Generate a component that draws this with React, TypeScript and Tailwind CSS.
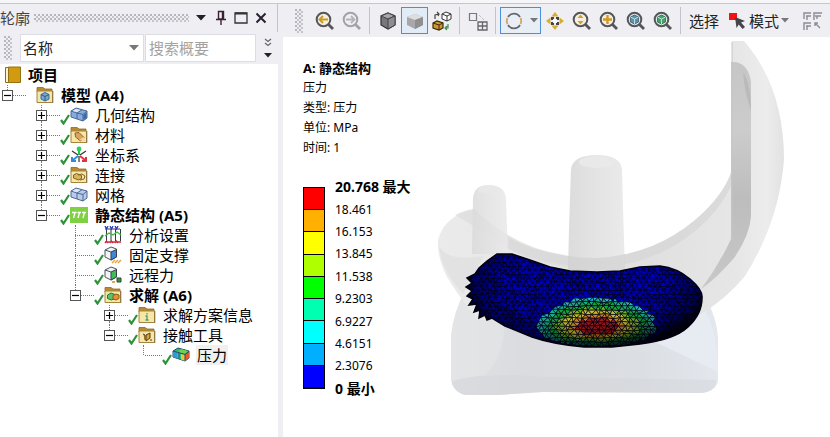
import React from 'react';

type TreeItem = {
  label: string;
  icon: React.ReactNode;
  // number of ancestor columns in front of the row
  depth: number;
  state?: 'open' | 'closed';
  down?: boolean;
  checked?: boolean;
  bold?: boolean;
  selected?: boolean;
};

/* ---------- tree icons ---------- */

const Icon = ({ children }: { children?: React.ReactNode }) => (
  <svg viewBox="0 0 18 18" className="h-[18px] w-[18px] shrink-0" aria-hidden="true">
    {children}
  </svg>
);

const Folder = ({ children }: { children?: React.ReactNode }) => (
  <Icon>
    <path d="M1 4.5V1.5h6l2 1.5h7v3H1z" fill="#b98a2e" stroke="#8b6a25" strokeWidth=".8" />
    <path d="M1 5h15.5v11.5H1z" fill="#f6e7a8" stroke="#a5853c" />
    <path d="M16.8 5v12" stroke="#8b7440" />
    {children}
  </Icon>
);

const Blocks = ({ light }: { light?: boolean }) => (
  <Icon>
    <path d="M1 5l5-3 11 3v7l-4 3L1 11z" fill={light ? '#b9cbea' : '#86abdc'} stroke="#4a6796" />
    <path d="M1 5l6 2 6 1.500 4-3.500M13 8.500V15M7 7v6M7 7l5-3.300" fill="none" stroke="#4a6796" />
    <path d="M2.500 5L6 2.800l4.500 1.200L7 6.300z" fill="#dce8fa" />
    {!light && <path d="M13.500 9l3-2.500v5.200l-3 2.300z" fill="#3c66a4" />}
  </Icon>
);

const Cube = ({ face, children }: { face: string; children?: React.ReactNode }) => (
  <Icon>
    <path d="M1 4l6-3 5.500 2v8L7 14l-6-3z" fill="#f2f5f8" stroke="#4b545e" />
    <path d="M7 6l5.500-2.500v7.500L7 14z" fill={face} stroke="#35414d" />
    <path d="M1 4l6 2" stroke="#4b545e" />
    {children}
  </Icon>
);

const ProjectIcon = () => (
  <Icon>
    <path d="M1.500 1.500h3v15h-3z" fill="#fff3cf" stroke="#8c6a1a" />
    <path d="M4.500 1h12v15.500h-12z" fill="#d29a10" stroke="#94700f" />
  </Icon>
);

const ModelIcon = () => (
  <Folder>
    <circle cx="9" cy="11" r="5" fill="#d5e6f3" />
    <path d="M9 6.500l4 2v4.500l-4 2-4-2V8.500z" fill="#7ba7cc" stroke="#3f6a92" />
    <path d="M5 8.500l4 2 4-2M9 10.500V15" fill="none" stroke="#315a80" />
  </Folder>
);

const MaterialIcon = () => (
  <Folder>
    <path d="M5 7l4-.5 5 5-3.500 3.500-5-4z" fill="#dda35e" stroke="#8f632c" />
    <path d="M9 14l5-3 1 4z" fill="#f3d7a2" />
  </Folder>
);

const AxesIcon = () => (
  <Icon>
    <path d="M9 9V2" stroke="#1fc44b" strokeWidth="2" />
    <circle cx="9" cy="3" r="2.400" fill="#27d256" />
    <path d="M8 10l-5 4M2 11v4h4" fill="none" stroke="#2f8be0" strokeWidth="2" />
    <path d="M10 10l5 4M16 11v4h-4" fill="none" stroke="#e23142" strokeWidth="2" />
    <path d="M2 5l6 4M16 5l-6 4M9 10v6" stroke="#333" strokeWidth="1.200" />
  </Icon>
);

const ConnectionsIcon = () => (
  <Folder>
    <path d="M3.500 9l3-1.500 5 2v3l-3 1.500-5-2z" fill="#d8b45c" stroke="#80622a" />
    <path d="M8 9l4-1 3 2-1 3-4 1" fill="none" stroke="#80622a" />
  </Folder>
);

const StaticIcon = () => (
  <Icon>
    <path d="M0 1h18v16H0z" fill="#7fd044" />
    <path d="M2 6.500h4.500M7.500 6.500H11M12 6.500h4M5 6.500L3.500 12M9.500 6.500L8 12M14.500 6.500L13 12" stroke="#fff" strokeWidth="1.300" />
  </Icon>
);

const AnalysisIcon = () => (
  <Icon>
    <path d="M1 3h15M2.500 3v12M7 3v12M11.500 3v12M16.500 3v12" stroke="#333a44" />
    <path d="M1 10l4-3 4 2 4-3 4 3" fill="none" stroke="#46b94a" strokeWidth="1.400" />
    <path d="M1 0l1.500 3L4 0M6 0l1.500 3L9 0M11 0l1.500 3L14 0" fill="none" stroke="#2a3cc8" strokeWidth="1.300" />
    <path d="M1 17l1.500-2L4 17M6 17l1.500-2L9 17M11 17l1.500-2 1.500 2M1 16h16" fill="none" stroke="#d22b35" strokeWidth="1.300" />
  </Icon>
);

const SolutionIcon = () => (
  <Folder>
    <path d="M3.500 9l3.500-2 4 1.500v4L7.500 14l-4-1.500z" fill="#4fc96a" stroke="#28753c" />
    <path d="M9 9.500l3-1.500 3 1v3.500L12 14l-3-1z" fill="#e79038" stroke="#8d5a21" />
  </Folder>
);

const InfoIcon = () => (
  <Folder>
    <path d="M9 7v1.500M7.500 10H9v4M7.500 14h3" fill="none" stroke="#43a06d" strokeWidth="1.300" />
  </Folder>
);

const ContactIcon = () => (
  <Folder>
    <path d="M5 8l2 1v5M8 9l4-2v5l-4 3z" fill="#d9a23a" stroke="#4d3c17" />
    <path d="M13 13v2" stroke="#4d3c17" />
  </Folder>
);

const PressureIcon = () => (
  <Icon>
    <path d="M1 5l5-3 11 3v7l-4 3L1 11z" fill="#35b96c" stroke="#26486f" />
    <path d="M1 5l4 1.500v6L1 11z" fill="#2f9ada" />
    <path d="M5 6.500l3.500 1v6L5 12.300z" fill="#33c5a0" />
    <path d="M13 8.500l4-3V12l-4 3z" fill="#e45a28" />
    <path d="M9 7.500l4 1V15l-4-1.500z" fill="#e8c93a" />
    <path d="M9 3l7 2-3.500 3-6-2z" fill="#6fd04a" />
    <path d="M1 5l12 3.500 4-3M13 8.500V15M7 7v6" fill="none" stroke="#26486f" />
  </Icon>
);

const FixedIcon = () => (
  <Cube face="#3f86d8">
    <path d="M8 17l3-3M11 17l3-3M14 17l3-3" stroke="#e4a33a" strokeWidth="1.400" />
  </Cube>
);

const RemoteForceIcon = () => (
  <Cube face="#3cbf50">
    <path d="M13 12h4v4h-4z" fill="#3e8d4b" stroke="#23512b" />
    <path d="M8 16h3" stroke="#d68632" strokeWidth="1.500" />
  </Cube>
);

const items: TreeItem[] = [
  { label: '模型 (A4)', icon: <ModelIcon />, depth: 0, state: 'open', bold: true },
  { label: '几何结构', icon: <Blocks />, depth: 1, state: 'closed', down: true, checked: true },
  { label: '材料', icon: <MaterialIcon />, depth: 1, state: 'closed', down: true, checked: true },
  { label: '坐标系', icon: <AxesIcon />, depth: 1, state: 'closed', down: true, checked: true },
  { label: '连接', icon: <ConnectionsIcon />, depth: 1, state: 'closed', down: true, checked: true },
  { label: '网格', icon: <Blocks light />, depth: 1, state: 'closed', down: true, checked: true },
  { label: '静态结构 (A5)', icon: <StaticIcon />, depth: 1, state: 'open', checked: true, bold: true },
  { label: '分析设置', icon: <AnalysisIcon />, depth: 2, down: true, checked: true },
  { label: '固定支撑', icon: <FixedIcon />, depth: 2, down: true, checked: true },
  { label: '远程力', icon: <RemoteForceIcon />, depth: 2, down: true, checked: true },
  { label: '求解 (A6)', icon: <SolutionIcon />, depth: 2, state: 'open', checked: true, bold: true },
  { label: '求解方案信息', icon: <InfoIcon />, depth: 3, state: 'closed', down: true, checked: true },
  { label: '接触工具', icon: <ContactIcon />, depth: 3, state: 'open', checked: true },
  { label: '压力', icon: <PressureIcon />, depth: 4, checked: true, selected: true },
];

const VLine = ({ on }: { on?: boolean }) => (
  <span className={on ? 'w-px flex-1 border-l border-dotted border-[#777]' : 'w-px flex-1'} />
);

const TreeRow = ({ item }: { item: TreeItem }) => (
  <li role="treeitem" aria-level={item.depth + 2} className="flex h-5 items-center">
    {Array.from({ length: item.depth }, (_, i) => (
      <span key={i} className="w-[34px] shrink-0" />
    ))}
    <span className="flex h-5 w-[36px] shrink-0 items-center pl-0.5">
      <span className="flex h-5 w-[11px] shrink-0 flex-col items-center">
        <VLine on />
        {item.state && (
          <button
            aria-label={item.state === 'open' ? '折叠' : '展开'}
            className="flex h-[11px] w-[11px] items-center justify-center border border-[#555] bg-white"
          >
            <svg viewBox="0 0 7 7" className="h-[7px] w-[7px]">
              <path d={item.state === 'open' ? 'M0 3.500h7' : 'M0 3.500h7M3.500 0v7'} stroke="#000" strokeWidth="1.200" />
            </svg>
          </button>
        )}
        <VLine on={item.down} />
      </span>
      <span className={'h-0 flex-1 border-t border-dotted border-[#777]' + (item.state ? '' : ' -ml-1')} />
      <svg viewBox="0 0 10 12" className="mt-2 h-3 w-[10px] shrink-0" aria-hidden="true">
        {item.checked && <path d="M1 7l2.500 3.500L9 2" fill="none" stroke="#2d9236" strokeWidth="2.200" />}
      </svg>
    </span>
    {item.icon}
    <span
      className={
        'ml-1.5 whitespace-nowrap px-px ' + (item.bold ? 'font-bold ' : '') + (item.selected ? 'bg-[#f0f0f0]' : '')
      }
    >
      {item.label}
    </span>
  </li>
);

const Caret = ({ className }: { className: string }) => (
  <svg viewBox="0 0 10 6" className={className} aria-hidden="true">
    <path d="M0 0h10L5 5.500z" fill="currentColor" />
  </svg>
);

const Grip = ({ className }: { className: string }) => (
  <span
    className={
      'bg-[radial-gradient(circle_at_1px_1px,#b6b6bc_1px,transparent_1px),radial-gradient(circle_at_3px_3px,#c4c4ca_1px,transparent_1px)] bg-[size:4px_4px] ' +
      className
    }
  />
);

const OutlinePanel = () => (
  <aside className="flex w-[283px] shrink-0 flex-col">
    <div className="mr-[5px] flex h-[28px] items-center border-r border-[#c4c4cc] pr-1.5 text-[#444]">
      <h2 className="whitespace-nowrap">轮廓</h2>
      <Grip className="ml-1 h-2 flex-1" />
      <button aria-label="菜单" className="ml-0.5 flex h-5 w-5 items-center justify-center">
        <Caret className="h-1.5 w-[10px] text-[#222]" />
      </button>
      <button aria-label="固定" className="flex h-5 w-5 items-center justify-center">
        <svg viewBox="0 0 12 16" className="h-4 w-3">
          <path d="M3.500 1.500h5V9h-5zM1 9.500h10M6 10v5M7.500 2v7" fill="none" stroke="#3b2230" strokeWidth="1.400" />
        </svg>
      </button>
      <button aria-label="最大化" className="flex h-5 w-5 items-center justify-center">
        <svg viewBox="0 0 14 12" className="h-3 w-[14px]">
          <path d="M1 1h12v10H1z" fill="none" stroke="#333" strokeWidth="1.300" />
          <path d="M1 1.500h12" stroke="#333" strokeWidth="2" />
        </svg>
      </button>
      <button aria-label="关闭" className="flex h-5 w-5 items-center justify-center">
        <svg viewBox="0 0 12 12" className="h-3 w-3">
          <path d="M1.500 1.500l9 9M10.500 1.500l-9 9" stroke="#2a2030" strokeWidth="2" />
        </svg>
      </button>
    </div>
    <div className="mr-[3px] flex h-[32px] items-center pl-1">
      <Grip className="h-6 w-2" />
      <div className="relative ml-2 h-7 w-[124px]">
        <select aria-label="筛选" className="h-7 w-full appearance-none border border-[#dcdce4] bg-white pl-0.5 text-[#222] outline-none">
          <option>名称</option>
        </select>
        <Caret className="pointer-events-none absolute right-[5px] top-[11px] h-1.5 w-[10px] text-[#777]" />
      </div>
      <input
        aria-label="搜索概要"
        placeholder="搜索概要"
        className="ml-px h-7 min-w-0 flex-1 border border-[#dcdce4] bg-white pl-[3px] outline-none placeholder:text-[#a2a2a2]"
      />
      <button aria-label="更多" className="flex w-6 flex-col items-center gap-1.5">
        <svg viewBox="0 0 8 9" className="h-[9px] w-2">
          <path d="M1 1l3 2.500L7 1M1 5l3 2.500L7 5" fill="none" stroke="#666" strokeWidth="1.200" />
        </svg>
        <Caret className="h-[5px] w-2 text-[#222]" />
      </button>
    </div>
    <div className="mr-[5px] flex-1 overflow-hidden bg-white">
      <ul role="tree" className="text-black">
        <li role="treeitem" aria-level={1} className="flex h-[21px] items-center pl-1 pt-px font-bold">
          <ProjectIcon />
          <span className="ml-1 px-0.5">项目</span>
        </li>
        {items.map((item) => (
          <TreeRow key={item.label} item={item} />
        ))}
      </ul>
    </div>
  </aside>
);

/* ---------- toolbar ---------- */

const Tool = ({ label, active, children }: { label: string; active?: boolean; children: React.ReactNode }) => (
  <button
    aria-label={label}
    className={
      'flex h-[27px] w-[27px] shrink-0 items-center justify-center ' +
      (active ? 'border border-[#4a90d9] bg-[#e2ecf7]' : '')
    }
  >
    <svg viewBox="0 0 20 20" className="h-5 w-5 shrink-0" fill="none">
      {children}
    </svg>
  </button>
);

const Divider = () => (
  <span className="flex h-[27px] w-[9px] shrink-0 justify-center">
    <span className="w-px bg-[#c2c2cc]" />
  </span>
);

const Lens = ({ color = '#55555a', fill = '#f5efe0' }: { color?: string; fill?: string }) => (
  <>
    <circle cx="8.500" cy="8.500" r="6.800" fill={fill} stroke={color} strokeWidth="2" />
    <path d="M13.500 13.500l4.500 4.500" stroke={color} strokeWidth="2.800" />
  </>
);

const LensCube = ({ fill }: { fill: string }) => (
  <>
    <path d="M8.500 4l4 2v5l-4 2-4-2V6z" fill={fill} stroke="#3e5c66" strokeWidth=".8" />
    <path d="M4.500 6l4 2 4-2M8.500 8v5" stroke="#cfe4e4" strokeWidth=".9" />
  </>
);

const Toolbar = () => (
  <div role="toolbar" className="flex h-[33px] items-center overflow-hidden pl-3 text-[#222]">
    <Grip className="mr-2 h-6 w-2 shrink-0" />
    <Tool label="上一视图">
      <Lens />
      <path d="M13 8.500H5M8 5L4.500 8.500 8 12" stroke="#d09a22" strokeWidth="2" />
    </Tool>
    <Tool label="下一视图">
      <Lens color="#a2a2a8" fill="#efeff2" />
      <path d="M4 8.500h8M9 5l3.500 3.500L9 12" stroke="#b4b4ba" strokeWidth="1.800" />
    </Tool>
    <Divider />
    <Tool label="着色边线">
      <path d="M10 2l7 3v9L10 18l-7-4V5z" fill="#77777c" stroke="#333" strokeWidth="1.200" />
      <path d="M3 5l7 3 7-3-7-3z" fill="#a5a5aa" stroke="#444" />
      <path d="M10 8v10l7-4V5z" fill="#8d8d92" stroke="#444" />
    </Tool>
    <Tool label="着色" active>
      <path d="M10 3l8 3v8l-8 4-8-4V6z" fill="#a8a8aa" />
      <path d="M2 6l8 3 8-3-8-3z" fill="#dededf" />
      <path d="M10 9v9l8-4V6z" fill="#8f8f92" />
    </Tool>
    <Tool label="线框切换">
      <path d="M10 3l4-2 5 2v5l-4 2-5-2z" fill="#fff" stroke="#333" />
      <path d="M10 3l5 2 4-2M15 5v5" stroke="#333" />
      <path d="M1 12l4-2 6 2v5l-4 2-6-2z" fill="#cf9730" stroke="#3a2b0d" strokeWidth="1.200" />
      <path d="M1 12l6 2 4-2M7 14v5" stroke="#3a2b0d" />
      <path d="M3 8V4l4-1M5 1l2 2-1 2" stroke="#444" strokeWidth="1.200" />
      <path d="M13 17h3v-4M15 15l-2 2 2 2" stroke="#3d8b55" strokeWidth="1.200" />
    </Tool>
    <Divider />
    <Tool label="随机颜色">
      <path d="M1.500 2.500h7v7h-7z" stroke="#77777c" strokeWidth="1.200" />
      <path d="M10 11h9v8h-9zM14.500 11v8M10 15h9" stroke="#66666b" strokeWidth="1.300" />
      <path d="M11 4l5 5" stroke="#aaa" strokeDasharray="1 1" />
    </Tool>
    <Divider />
    <button
      aria-label="旋转"
      className="flex h-[27px] w-[41px] shrink-0 items-center justify-between border border-[#4a90d9] bg-[#e8eef6] pl-1 pr-0.5"
    >
      <svg viewBox="0 0 18 18" className="h-[18px] w-[18px]" fill="none">
        <path d="M3 5a7 7 0 0 1 12 0M15 13a7 7 0 0 1-12 0" stroke="#66666b" strokeWidth="1.800" />
        <path d="M2.500 12a7 7 0 0 1 0-6M15.500 6a7 7 0 0 1 0 6" stroke="#d8a45c" strokeWidth="1.800" />
      </svg>
      <Caret className="h-[5px] w-2 text-[#777]" />
    </button>
    <Tool label="平移">
      <path d="M10 1l3.500 4.500h-7zM10 19l3.500-4.500h-7zM1 10l4.500-3.500v7zM19 10l-4.500-3.500v7z" fill="#d7ae2c" />
      <path d="M6 6h3v2H8v1H6zM14 6h-3v2h1v1h2zM6 14h3v-2H8v-1H6zM14 14h-3v-2h1v-1h2z" fill="#44444a" />
      <path d="M8.500 8.500h3v3h-3z" fill="#fff" />
    </Tool>
    <Tool label="缩放">
      <Lens />
      <path d="M8.500 3.500l3 3.500h-6zM8.500 13.500l3-3.500h-6z" fill="#d5a021" />
    </Tool>
    <Tool label="框选缩放">
      <Lens />
      <path d="M8.500 4v9M4 8.500h9" stroke="#d09a22" strokeWidth="2.400" />
    </Tool>
    <Tool label="适合窗口">
      <Lens fill="#dbe6ec" />
      <LensCube fill="#5b93ae" />
    </Tool>
    <Tool label="缩放到选择">
      <Lens fill="#dbeee2" />
      <LensCube fill="#45a369" />
    </Tool>
    <Divider />
    <span className="ml-0.5 shrink-0 px-0.5">选择</span>
    <button className="ml-1.5 flex shrink-0 items-center">
      <svg viewBox="0 0 20 20" className="h-5 w-5" fill="none" aria-hidden="true">
        <path d="M2 2h8v7H2z" fill="#f01414" />
        <path d="M8 6l10 4-4 1.500 4 4.500-2.500 2-3.700-4.500L9.500 17z" fill="#44444a" />
      </svg>
      <span className="ml-0.5">模式</span>
      <Caret className="ml-0.5 h-[5px] w-2 text-[#777]" />
    </button>
    <span className="ml-2.5">
      <Tool label="选择过滤">
        <path
          d="M1 8V2h7M3 5h5M4 5v4M11 9V2h8M12 5h6M14 5v3M1 19v-7h7M3 15h5M4 15v4M12 12l5 5M12 15v-3h3"
          stroke="#8c8c92"
          strokeWidth="1.400"
        />
      </Tool>
    </span>
  </div>
);

/* ---------- legend ---------- */

const bands = [
  'bg-[#ff0000]',
  'bg-[#ffb000]',
  'bg-[#ffff00]',
  'bg-[#b0ff00]',
  'bg-[#00ff00]',
  'bg-[#00ffb0]',
  'bg-[#00ffff]',
  'bg-[#00b0ff]',
  'bg-[#0000ff]',
];

const ticks = ['20.768 最大', '18.461', '16.153', '13.845', '11.538', '9.2303', '6.9227', '4.6151', '2.3076', '0 最小'];

const Legend = () => (
  <section className="w-[147px] shrink-0 pl-5 pt-[21px] text-xs text-black">
    <h1 className="whitespace-nowrap text-[13px] font-bold leading-5">A: 静态结构</h1>
    <p className="leading-5">压力</p>
    <p className="leading-5">类型: 压力</p>
    <p className="leading-5">单位: MPa</p>
    <p className="leading-5">时间: 1</p>
    <div className="mt-[18px] flex h-[224px]">
      <div className="my-[11px] flex w-[22px] flex-col border border-b-2 border-black">
        {bands.map((band, i) => (
          <span key={band} className={'flex-1 ' + band + (i > 0 ? ' border-t border-black' : '')} />
        ))}
      </div>
      <ol className="ml-2.5 flex flex-col whitespace-nowrap">
        {ticks.map((tick, i) => (
          <li
            key={tick}
            className={'flex flex-1 items-center ' + (i === 0 || i === ticks.length - 1 ? 'text-sm font-bold' : '')}
          >
            {tick}
          </li>
        ))}
      </ol>
    </div>
  </section>
);

/* ---------- contact pressure mesh ---------- */

const PATCH =
  'M497 254L512 254 530 260 550 267 570 271 597 272 620 271 640 267 660 266Q677 268 690 279T702 298Q702 314 688 327T640 344L612 347 584 347Q552 344 532 337L505 326 492 318 487 320 485 315 479 318 480 310 474 312 477 304 469 305 473 299 467 296 472 291 466 287 472 283 467 278 475 274 479 268 487 261Z';

const noise = (n: number) => {
  const s = Math.sin(n * 127.1) * 43758.5453;
  return s - Math.floor(s);
};

const pressureColor = (x: number, y: number) => {
  const d = Math.hypot((x - 597) / 57, (y - 328) / (y > 328 ? 18 : 29)) + (noise(x * 3 + y) - 0.5) * 0.06;
  if (d < 0.36) return '#a01818';
  if (d < 0.48) return '#c8821c';
  if (d < 0.62) return '#c4bc2c';
  if (d < 0.72) return '#74b424';
  if (d < 0.88) return '#18a03c';
  if (d < 0.97) return '#1cac88';
  if (d < 1.04) return '#28b0c4';
  return noise(x + y * 3) > 0.5 ? '#0000c4' : '#00009a';
};

const buildMesh = () => {
  const stepX = 6;
  const stepY = 4;
  const point = (c: number, r: number) => [
    460 + c * stepX + (r % 2) * 3 + (noise(c * 31 + r * 7) - 0.5) * 2.4,
    250 + r * stepY + (noise(c * 17 + r * 43) - 0.5) * 1.6,
  ];
  const cells: { points: string; fill: string }[] = [];
  for (let r = 0; r < 26; r++) {
    for (let c = 0; c < 42; c++) {
      const a = point(c, r);
      const b = point(c + 1, r);
      const d = point(c, r + 1);
      const e = point(c + 1, r + 1);
      const pairs = r % 2 ? [[a, b, e], [a, d, e]] : [[a, b, d], [b, d, e]];
      pairs.forEach((t) => {
        const x = (t[0][0] + t[1][0] + t[2][0]) / 3;
        const y = (t[0][1] + t[1][1] + t[2][1]) / 3;
        cells.push({
          points: t.map((p) => p[0].toFixed(1) + ',' + p[1].toFixed(1)).join(' '),
          fill: pressureColor(x, y),
        });
      });
    }
  }
  return cells;
};

const mesh = buildMesh();

const Model = () => (
  <svg
    viewBox="430 37 400 400"
    preserveAspectRatio="xMinYMin meet"
    className="h-[400px] min-w-0 flex-1"
    role="img"
    aria-label="压力云图"
  >
    <defs>
      <clipPath id="patch">
        <path d={PATCH} />
      </clipPath>
      <linearGradient id="post" x1="0" x2="1">
        <stop offset="0" stopColor="#dadada" />
        <stop offset=".35" stopColor="#e0e0e0" />
        <stop offset="1" stopColor="#e9e9e9" />
      </linearGradient>
      <linearGradient id="rim" x1="0" x2="1" y1="0" y2="0">
        <stop offset="0" stopColor="#ebebeb" />
        <stop offset=".6" stopColor="#e0e0e0" />
        <stop offset=".85" stopColor="#e6e6e6" />
        <stop offset=".95" stopColor="#ececec" />
        <stop offset="1" stopColor="#e2e2e2" />
      </linearGradient>
      <linearGradient id="wall" x1="0" x2="0" y1="0" y2="1">
        <stop offset="0" stopColor="#c6c6c6" />
        <stop offset=".3" stopColor="#cccccc" />
        <stop offset=".6" stopColor="#bdbdbd" />
        <stop offset="1" stopColor="#c8c8c8" />
      </linearGradient>
      <linearGradient id="base" x1="0" x2="1" y1="0" y2="0">
        <stop offset="0" stopColor="#e0e2e4" />
        <stop offset=".25" stopColor="#dadcdf" />
        <stop offset=".7" stopColor="#dbdee2" />
        <stop offset="1" stopColor="#e3e7ee" />
      </linearGradient>
      <radialGradient id="edge" gradientUnits="userSpaceOnUse" cx="0" cy="0" r="1" gradientTransform="translate(585 282) scale(130 66)">
        <stop offset=".6" stopColor="#000" stopOpacity="0" />
        <stop offset=".85" stopColor="#000" stopOpacity=".4" />
        <stop offset="1" stopColor="#000" stopOpacity=".9" />
      </radialGradient>
    </defs>

    {/* tibial base */}
    <path
      d="M466 289Q453 313 451 336V379Q452 391 465 395L498 395 543 392 702 393Q716 391 718 381V338Q717 318 705 296Z"
      fill="url(#base)"
    />
    <path d="M655 342L703 308Q717 326 718 372Z" fill="#e8ecf4" opacity=".8" />
    <path d="M505 326Q502 360 485 375L451 380V336Q456 305 466 289Z" fill="#e6e8ea" opacity=".5" />
    <path d="M452 382Q480 372 543 377L716 380Q716 391 702 393L543 392 498 395H465Q454 392 452 382Z" fill="#d3d6d9" opacity=".5" />

    {/* femoral component */}
    <path
      d="M732 41H744Q784 87 784 160 779 222 745 276 726 299 701 314L640 320 480 320Q464 305 447 277 437 258 438 240 444 216 474 209 525 258 594 258 658 256 704 212 727 189 732 169Z"
      fill="url(#rim)"
    />
    <path d="M510 239Q550 258 594 258 658 256 704 212 727 189 732 169V184Q718 215 686 238 650 264 600 268 545 266 508 248Z" fill="#d6d6d6" opacity=".7" />
    <path d="M455 215Q464 210 474 209 500 234 530 248L600 262 598 270Q545 268 510 250 478 228 455 215Z" fill="#dadada" opacity=".6" />
    <path d="M439 246Q447 262 484 256L470 280 463 294Q441 270 439 246Z" fill="#e2e2e2" />
    <path d="M731 62Q748 61 751 82V216Q750 235 734 258 717 278 701 289 719 265 731 239Z" fill="url(#wall)" />
    <path d="M743 72Q751 84 751 110 745 95 743 72Z" fill="#b4b4b4" opacity=".7" />
    <path d="M732 42V240" stroke="#c6c6c6" />

    {/* pegs */}
    <path d="M473 198Q474 185 489 185 505 185 506 199L508 254H472Z" fill="url(#post)" opacity=".85" />
    <ellipse cx="489" cy="190" rx="11" ry="4" fill="#e8e8e8" />
    <path d="M571 169Q573 155 597 155 620 155 622 169L623 208 625 272H568L569 228Z" fill="url(#post)" opacity=".95" />
    <ellipse cx="597" cy="162" rx="18" ry="6" fill="#e9e9e9" />
    <path d="M568 256Q598 261 625 254V272H568Z" fill="#cfcfcf" opacity=".6" />

    {/* contact patch */}
    <g clipPath="url(#patch)">
      <path d={PATCH} fill="#000060" />
      {mesh.map((cell, i) => (
        <polygon key={i} points={cell.points} fill={cell.fill} stroke="#000018" strokeWidth=".7" />
      ))}
      <path d={PATCH} fill="url(#edge)" />
    </g>
    <path d={PATCH} fill="none" stroke="#000010" strokeWidth="1.500" />
  </svg>
);

const App: React.FC = () => {
  return (
    <div className="flex min-h-screen flex-col bg-[#eeeef3] font-['Noto_Sans','Noto_Sans_CJK_SC',sans-serif] text-[15px] leading-5">
      <div className="h-1 border-b border-[#c6c6cc] bg-[#f6f6f8]" />
      <div className="flex flex-1">
        <OutlinePanel />
        <main className="flex min-w-0 flex-1 flex-col">
          <Toolbar />
          <div className="flex flex-1 bg-white">
            <Legend />
            <Model />
          </div>
        </main>
      </div>
    </div>
  );
};

export default App;
